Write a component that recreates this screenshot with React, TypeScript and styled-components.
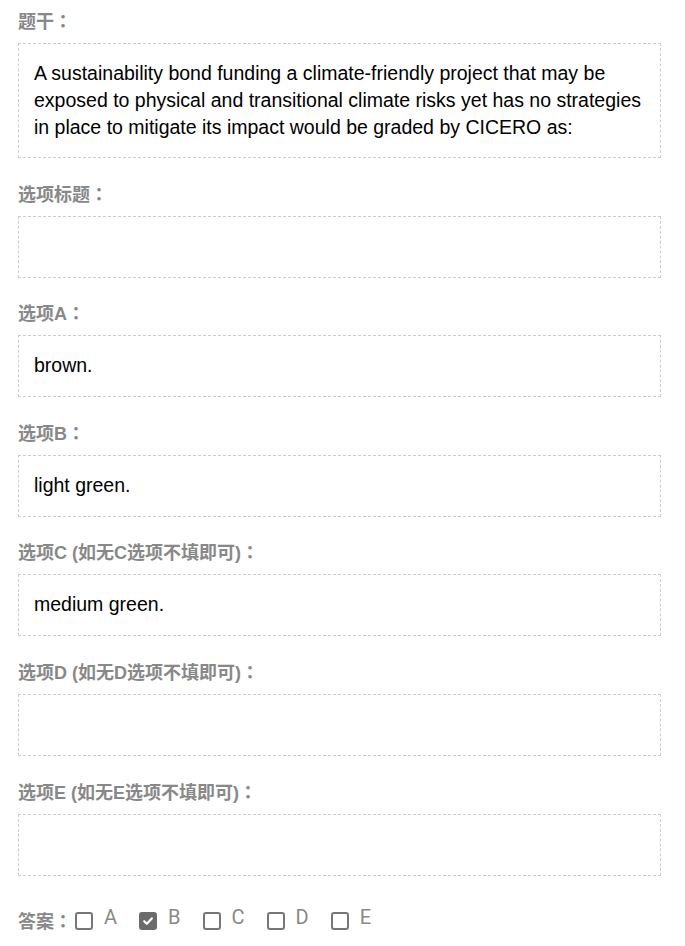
import React from "react";
import styled, { createGlobalStyle } from "styled-components";

const Global = createGlobalStyle`
  html, body { margin: 0; padding: 0; background: #fff; }
  body { font-family: "Liberation Sans", "Noto Sans CJK SC", Arial, sans-serif; }
`;

const Page = styled.div`
  width: 643px;
  padding: 9px 24px 0 18px;
  display: flex;
  flex-direction: column;
`;

const Section = styled.section`
  display: flex;
  flex-direction: column;
  & + & { margin-top: 23.6px; }
`;

const Label = styled.div`
  font-family: "Liberation Sans", "Noto Sans CJK SC", sans-serif;
  font-weight: bold;
  font-size: 18px;
  line-height: 22px;
  height: 22px;
  color: #888;
  white-space: nowrap;
`;

const Colon = styled.span`
  font-family: "Noto Sans CJK TC", "Noto Sans CJK SC", sans-serif;
  font-weight: bold;
`;

const Box = styled.div`
  box-sizing: border-box;
  margin-top: 12px;
  min-height: 62px;
  border: 1px dashed #ccc;
  padding: 16px 12px 16px 15px;
  font-family: "Liberation Sans", Arial, sans-serif;
  font-size: 19.5px;
  line-height: 27px;
  color: #000;
`;

const AnswerRow = styled.div`
  margin-top: 32px;
  display: flex;
  align-items: center;
  height: 24px;
`;

const AnswerLabel = styled(Label)`
  margin-right: 3px;
`;

const Option = styled.label`
  display: flex;
  align-items: center;
  margin-right: 22px;
`;

const Check = styled.span<{ $checked?: boolean }>`
  box-sizing: border-box;
  width: 18px;
  height: 18px;
  border-radius: 3px;
  border: 2px solid ${(p) => (p.$checked ? "#6b6b6b" : "#777")};
  background: ${(p) => (p.$checked ? "#6b6b6b" : "#fff")};
  display: flex;
  align-items: center;
  justify-content: center;
  margin-top: 2px;
`;

const Letter = styled.span`
  margin-left: 11px;
  font-family: Roboto, "Liberation Sans", sans-serif;
  font-size: 20px;
  line-height: 24px;
  color: #888;
  transform: translateY(-3px);
`;

type Field = { label: string; text?: string };

const fields: Field[] = [
  {
    label: "题干",
    text:
      "A sustainability bond funding a climate-friendly project that may be exposed to physical and transitional climate risks yet has no strategies in place to mitigate its impact would be graded by CICERO as:",
  },
  { label: "选项标题" },
  { label: "选项A", text: "brown." },
  { label: "选项B", text: "light green." },
  { label: "选项C (如无C选项不填即可)", text: "medium green." },
  { label: "选项D (如无D选项不填即可)" },
  { label: "选项E (如无E选项不填即可)" },
];

const options = ["A", "B", "C", "D", "E"];

export default function App() {
  return (
    <>
      <Global />
      <Page>
        {fields.map((f) => (
          <Section key={f.label}>
            <Label>
              {f.label}
              <Colon>：</Colon>
            </Label>
            <Box>{f.text}</Box>
          </Section>
        ))}
        <AnswerRow>
          <AnswerLabel>
            答案<Colon>：</Colon>
          </AnswerLabel>
          {options.map((o) => (
            <Option key={o}>
              <Check $checked={o === "B"}>
                {o === "B" && (
                  <svg width="12" height="12" viewBox="0 0 12 12">
                    <path
                      d="M2.2 6.2 L4.8 8.7 L9.8 3.4"
                      fill="none"
                      stroke="#fff"
                      strokeWidth="2.2"
                      strokeLinecap="round"
                      strokeLinejoin="round"
                    />
                  </svg>
                )}
              </Check>
              <Letter>{o}</Letter>
            </Option>
          ))}
        </AnswerRow>
      </Page>
    </>
  );
}
